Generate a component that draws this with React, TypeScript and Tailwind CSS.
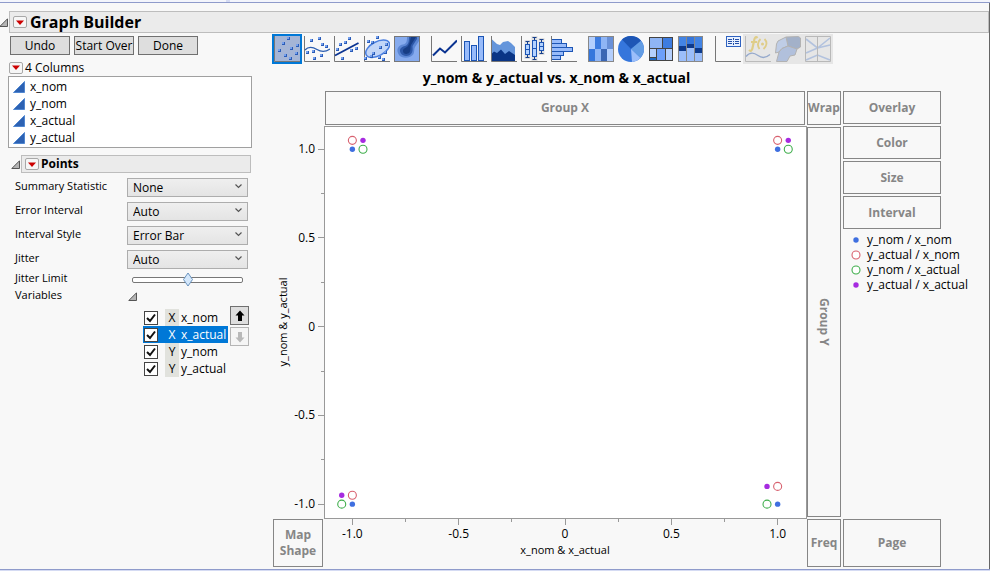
import { useId, useState } from 'react';
import type { ReactNode } from 'react';

const COLUMNS = ['x_nom', 'y_nom', 'x_actual', 'y_actual'];

const OPTIONS = [
    { label: 'Summary Statistic', values: ['None', 'Mean', 'Median'] },
    { label: 'Error Interval', values: ['Auto', 'None', 'Range'] },
    { label: 'Interval Style', values: ['Error Bar', 'Band'] },
    { label: 'Jitter', values: ['Auto', 'None'] },
];

const VARIABLES = [
    { role: 'X', name: 'x_nom' },
    { role: 'X', name: 'x_actual' },
    { role: 'Y', name: 'y_nom' },
    { role: 'Y', name: 'y_actual' },
];

const ROWS = [
    { xNom: -1, yNom: 1, xActual: -0.95, yActual: 1.05 },
    { xNom: 1, yNom: 1, xActual: 1.05, yActual: 1.05 },
    { xNom: -1, yNom: -1, xActual: -1.05, yActual: -0.95 },
    { xNom: 1, yNom: -1, xActual: 0.95, yActual: -0.9 },
];

type Row = (typeof ROWS)[number];

interface Series {
    label: string;
    x: keyof Row;
    y: keyof Row;
    color: string;
    open: boolean;
}

const SERIES: Series[] = [
    { label: 'y_nom / x_nom', x: 'xNom', y: 'yNom', color: '#3f6fe0', open: false },
    { label: 'y_actual / x_nom', x: 'xNom', y: 'yActual', color: '#d8616f', open: true },
    { label: 'y_nom / x_actual', x: 'xActual', y: 'yNom', color: '#3fae4c', open: true },
    { label: 'y_actual / x_actual', x: 'xActual', y: 'yActual', color: '#a62be0', open: false },
];

const TICKS = [-1, -0.75, -0.5, -0.25, 0, 0.25, 0.5, 0.75, 1];

// Axis limits are a little wider than the data, so values map to percentages
const toX = (v: number) => `${50 + v * 44.3}%`;
const toY = (v: number) => `${51.2 - v * 45.5}%`;
const isMajor = (v: number) => (v * 2) % 1 === 0;
const tickLabel = (v: number) => (v === 0 ? '0' : v.toFixed(1));

function Marker({ cx, cy, color, open }: { cx: string; cy: string; color: string; open: boolean }) {
    return open ? (
        <circle cx={cx} cy={cy} r="4" fill="white" stroke={color} strokeWidth="1.1" />
    ) : (
        <circle cx={cx} cy={cy} r="2.7" fill={color} />
    );
}

function Disclosure({ className = '' }: { className?: string }) {
    return (
        <svg width="9" height="9" viewBox="0 0 9 9" className={`shrink-0 ${className}`}>
            <path d="M8.5 0.8V8.5H0.8Z" fill="#b4b4b4" stroke="#555" />
        </svg>
    );
}

function RedTriangle({ label }: { label: string }) {
    return (
        <button
            aria-label={label}
            className="flex h-3 w-[14px] shrink-0 items-center justify-center rounded-xs border border-[#a8a8a8] bg-[#f6f6f6]"
        >
            <svg width="8" height="5" viewBox="0 0 8 5">
                <path d="M0 0.5H8L4 5Z" fill="#cc0000" />
            </svg>
        </button>
    );
}

function Zone({ children, className = '' }: { children: ReactNode; className?: string }) {
    return (
        <div
            className={`flex items-center justify-center border border-[#868686] text-center leading-4 font-bold text-[#868686] ${className}`}
        >
            {children}
        </div>
    );
}

function Axes() {
    return <path d="M0.5 0V25.5H26" fill="none" stroke="#777" />;
}

function Dots({ points }: { points: number[][] }) {
    return (
        <>
            {points.map(([x, y]) => (
                <g key={`${x},${y}`}>
                    <rect x={x - 1.5} y={y - 1.5} width="3" height="3" fill="#2a5cb8" />
                    <rect x={x - 1.5} y={y - 1.5} width="2" height="2" fill="#76a0ec" />
                </g>
            ))}
        </>
    );
}

function BoxGlyph({ x, top, bottom, low, high }: { x: number; top: number; bottom: number; low: number; high: number }) {
    return (
        <g>
            <rect x={x - 3} y={top - 1} width="6" height={bottom - top + 2} fill="#dedede" />
            <path
                d={`M${x} ${top}V${bottom}M${x - 2} ${top + 0.5}H${x + 2}M${x - 2} ${bottom - 0.5}H${x + 2}`}
                stroke="#163f8c"
            />
            <rect x={x - 2} y={low} width="4" height={high - low} fill="#b3d2ff" stroke="#1c55b5" />
            <path d={`M${x - 2} ${(low + high) / 2}H${x + 2}`} stroke="#1c55b5" />
        </g>
    );
}

interface Tool {
    name: string;
    icon: ReactNode;
    disabled?: boolean;
}

const TOOL_GROUPS: Tool[][] = [
    [
        {
            name: 'Points',
            icon: (
                <>
                    <Axes />
                    <Dots points={[[14.5, 2.5], [9.5, 7.5], [23.5, 9.5], [17.5, 12.5], [5.5, 14.5], [22.5, 17.5], [11.5, 19.5], [16.5, 22.5]]} />
                </>
            ),
        },
        {
            name: 'Smoother',
            icon: (
                <>
                    <Axes />
                    <Dots points={[[7.5, 4.5], [15.5, 2.5], [18.5, 8.5], [22.5, 10.5], [3.5, 16.5], [9.5, 15.5], [17.5, 19.5], [10.5, 22.5]]} />
                    <path d="M1 14C5 9.5 9 11 13 13.5S21 16.5 26 13" fill="none" stroke="#2b5db0" strokeWidth="1.3" />
                </>
            ),
        },
        {
            name: 'Line of Fit',
            icon: (
                <>
                    <Axes />
                    <Dots points={[[15.5, 2.5], [11.5, 6.5], [6.5, 8.5], [3.5, 13.5], [22.5, 12.5], [17.5, 14.5], [8.5, 22.5]]} />
                    <path d="M1 19.5L24.5 7" stroke="#0a3391" strokeWidth="1.8" />
                </>
            ),
        },
        {
            name: 'Ellipse',
            icon: (
                <>
                    <Axes />
                    <ellipse cx="13.7" cy="12.7" rx="13" ry="7" transform="rotate(-28 13.7 12.7)" fill="#c3d6f7" stroke="#4a7fe0" strokeWidth="1.5" />
                    <Dots points={[[13.5, 1.5], [4.5, 5.5], [8.5, 6.5], [16.5, 11.5], [22.5, 8.5], [9.5, 17.5], [21.5, 16.5], [7.5, 20.5], [1.5, 22.5], [15.5, 21.5], [19.5, 23.5]]} />
                </>
            ),
        },
        {
            name: 'Contour',
            icon: (
                <>
                    <rect x="0.5" y="0.5" width="25" height="25" fill="#86abee" stroke="#777" />
                    <path d="M13 1H25V5L21 11C20 13 20.5 15 19.5 18C17 22.5 8 23 5 19C1 13 5 9 9 8.5C13 8 13 4 13 1Z" fill="#5c87d4" />
                    <path d="M15 1H23V3L18.5 10C18.5 12 19 14 18 16.5C16 21 9 21 7 17.5C4 13 8 10.5 11 10C15 9 15 4 15 1Z" fill="#2d58a8" />
                    <path d="M17 1H22L17 9C16 12 17 14 15.5 16.5C13 19 9 18 9 15C9 12 12 12 14 10C16 7 16 4 17 1Z" fill="#173d85" />
                </>
            ),
        },
    ],
    [
        {
            name: 'Line',
            icon: (
                <>
                    <Axes />
                    <path d="M2 19.5L9 12.5L14 16.5L26 4.5" fill="none" stroke="#0a3391" strokeWidth="2" />
                </>
            ),
        },
        {
            name: 'Bar',
            icon: (
                <>
                    <g fill="#98bbfa" stroke="#1c55b5">
                        <rect x="3.5" y="5.5" width="5" height="19" />
                        <rect x="10.5" y="9.5" width="5" height="15" />
                        <rect x="17.5" y="0.5" width="5" height="24" />
                    </g>
                    <Axes />
                </>
            ),
        },
        {
            name: 'Area',
            icon: (
                <>
                    <path d="M0.5 3L6 8L9 9L12 6L17 5L20 7L24 11V25H0.5Z" fill="#6495db" />
                    <path d="M0.5 18L3 15.5L6 17L10 13.5L14 18L18 15L24 19V25H0.5Z" fill="#0a3585" />
                    <Axes />
                </>
            ),
        },
        {
            name: 'Box Plot',
            icon: (
                <>
                    <Axes />
                    <BoxGlyph x={6.5} top={5} bottom={22} low={8.5} high={18.5} />
                    <BoxGlyph x={13.5} top={1} bottom={24} low={4.5} high={20.5} />
                    <BoxGlyph x={20.5} top={3} bottom={18} low={6.5} high={14.5} />
                </>
            ),
        },
        {
            name: 'Histogram',
            icon: (
                <>
                    <g fill="#98bbfa" stroke="#1c55b5">
                        <rect x="0.5" y="3.5" width="10" height="4" />
                        <rect x="0.5" y="7.5" width="15" height="4" />
                        <rect x="0.5" y="11.5" width="21" height="4" />
                        <rect x="0.5" y="15.5" width="12" height="4" />
                        <rect x="0.5" y="19.5" width="9" height="4" />
                    </g>
                    <Axes />
                </>
            ),
        },
    ],
    [
        {
            name: 'Heatmap',
            icon: (
                <>
                    <rect width="26" height="26" fill="#888" />
                    <rect x="1" y="1" width="6" height="12" fill="#b4cffd" />
                    <rect x="7" y="1" width="6" height="12" fill="#3d7ce0" />
                    <rect x="13" y="1" width="6" height="12" fill="#8fb5f5" />
                    <rect x="19" y="1" width="6" height="12" fill="#6890d8" />
                    <rect x="1" y="13" width="6" height="12" fill="#3576dc" />
                    <rect x="7" y="13" width="6" height="12" fill="#8fb5f5" />
                    <rect x="13" y="13" width="6" height="12" fill="#3a66b4" />
                    <rect x="19" y="13" width="6" height="12" fill="#b4cffd" />
                </>
            ),
        },
        {
            name: 'Pie',
            icon: (
                <>
                    <circle cx="13" cy="13" r="13" fill="#3576dc" />
                    <path d="M13 13L4 3.6A13 13 0 0 1 23 4.7Z" fill="#1d56b5" />
                    <path d="M13 13L23 4.7A13 13 0 0 1 22.5 22Z" fill="#629ce4" />
                    <path d="M13 13L22.5 22A13 13 0 0 1 14 26Z" fill="#9bbefa" />
                </>
            ),
        },
        {
            name: 'Treemap',
            icon: (
                <>
                    <rect x="1" y="1" width="24" height="24" fill="#444" />
                    <rect x="2" y="2" width="12" height="10" fill="#8fb5f5" />
                    <rect x="15" y="2" width="9" height="10" fill="#3d7ce0" />
                    <rect x="2" y="13" width="6" height="8" fill="#b4cffd" />
                    <rect x="2" y="22" width="6" height="2" fill="#1d68c4" />
                    <rect x="9" y="13" width="8" height="11" fill="#6c9ffa" />
                    <rect x="18" y="13" width="6" height="11" fill="#b4cffd" />
                </>
            ),
        },
        {
            name: 'Mosaic',
            icon: (
                <>
                    <rect width="25" height="26" fill="#888" />
                    <rect x="1" y="1" width="7" height="9" fill="#4384e4" />
                    <rect x="1" y="10" width="7" height="5" fill="#0d3a8c" />
                    <rect x="1" y="15" width="7" height="10" fill="#9bbefa" />
                    <rect x="9" y="1" width="7" height="7" fill="#3576dc" />
                    <rect x="9" y="8" width="7" height="4" fill="#0d3a8c" />
                    <rect x="9" y="12" width="7" height="13" fill="#9bbefa" />
                    <rect x="17" y="1" width="7" height="11" fill="#4384e4" />
                    <rect x="17" y="12" width="7" height="5" fill="#0d3a8c" />
                    <rect x="17" y="17" width="7" height="8" fill="#9bbefa" />
                </>
            ),
        },
    ],
    [
        {
            name: 'Caption Box',
            icon: (
                <>
                    <Axes />
                    <rect x="11.5" y="0.5" width="14" height="10" fill="#e8f1ff" stroke="#2f62c0" />
                    <path d="M13 3.5H17M20 3.5H24M13 5.5H17M20 5.5H24M13 7.5H17M20 7.5H24M18.5 2V4M18.5 5V6M18.5 7V9" stroke="#234fa8" />
                </>
            ),
        },
        {
            name: 'Formula',
            disabled: true,
            icon: (
                <>
                    <path d="M0.5 0V25.5H26" fill="none" stroke="#bbb" />
                    <path d="M1 20.5C5 15.5 9 16.5 13 19.5S21 22 25 18.5" fill="none" stroke="#95a9cc" strokeWidth="1.3" />
                    <g fill="none" stroke="#dfcd88">
                        <path d="M12.5 2C10.5 0 9.5 2 9 5L7.5 12C7 15 5.5 15.5 4 14M6 6H12" strokeWidth="2.2" />
                        <path d="M15.5 3C12.5 6 12.5 10 14.5 13M19.5 3C22.5 6 22 10 18.5 13" strokeWidth="1.8" />
                    </g>
                    <circle cx="17.5" cy="8" r="1.5" fill="#dfcd88" />
                </>
            ),
        },
        {
            name: 'Map Shapes',
            disabled: true,
            icon: (
                <g stroke="#b2b2b2">
                    <path d="M11 1L23.5 0.5L25.5 2V11L22 13L13 10Z" fill="#a3b1c9" />
                    <path d="M3 5L11 1L13 10L7 12.5L4 16L0.5 17L1.5 8Z" fill="#bfcde6" />
                    <path d="M13 10L22 13L20 19L15 20L12 25.5H1.5L4 16L7 12.5Z" fill="#b1c0dc" />
                </g>
            ),
        },
        {
            name: 'Parallel',
            disabled: true,
            icon: (
                <>
                    <path
                        d="M1 3L12.5 12L25 2M1 17L12.5 12L25 9M1 24L12.5 19L25 24"
                        fill="none"
                        stroke="#b2c2de"
                        strokeWidth="1.6"
                    />
                    <path d="M0.5 0.5H25.5V25.5H0.5ZM12.5 0.5V25.5" fill="none" stroke="#b8b8b8" />
                </>
            ),
        },
    ],
];

function Toolbar() {
    const [active, setActive] = useState('Points');

    return (
        <div className="flex gap-[7px]">
            {TOOL_GROUPS.map((group) => (
                <div key={group[0].name} className="flex">
                    {group.map((tool) => (
                        <button
                            key={tool.name}
                            aria-label={tool.name}
                            disabled={tool.disabled}
                            onClick={() => setActive(tool.name)}
                            className={`flex size-[30px] items-center justify-center ${
                                active === tool.name ? 'border-2 border-[#0078d7] bg-[#a5b5d6]' : ''
                            } ${tool.disabled ? 'bg-[#e6e6e6]' : ''}`}
                        >
                            <svg width="26" height="26" viewBox="0 0 26 26" className="shrink-0">
                                {tool.icon}
                            </svg>
                        </button>
                    ))}
                </div>
            ))}
        </div>
    );
}

function JitterSlider({ id }: { id: string }) {
    const [value, setValue] = useState(50);

    return (
        <div className="relative mx-[5px] -mb-[3px] h-5">
            <input
                id={id}
                type="range"
                value={value}
                onChange={(e) => setValue(Number(e.target.value))}
                className="absolute inset-0 w-full opacity-0"
            />
            <div className="pointer-events-none flex h-full items-center">
                <div className="h-[6px] w-full rounded-xs border border-[#777] bg-white" />
            </div>
            <svg
                width="11"
                height="15"
                viewBox="0 0 11 15"
                className="pointer-events-none absolute top-[2px] -translate-x-1/2"
                style={{ left: `${value}%` }}
            >
                <path d="M5.5 1L10 7.5L5.5 14L1 7.5Z" fill="#d5e8fb" stroke="#6a93be" />
            </svg>
        </div>
    );
}

function VariableList() {
    const [checked, setChecked] = useState([true, true, true, true]);
    const [selected, setSelected] = useState(1);

    return (
        <div className="mt-[3px] flex justify-end gap-[2px] pr-[3px]">
            <ul className="mt-[3px] w-[85px]">
                {VARIABLES.map((v, i) => (
                    <li
                        key={v.name}
                        onClick={() => setSelected(i)}
                        className={`h-[17px] ${i === selected ? 'bg-[#0078d7] text-white' : ''}`}
                    >
                        <label className="flex h-full items-center pl-px">
                            <span className="grid">
                                <input
                                    type="checkbox"
                                    checked={checked[i]}
                                    onChange={() => setChecked(checked.map((c, j) => (j === i ? !c : c)))}
                                    className="peer col-start-1 row-start-1 size-[14px] appearance-none border border-[#444] bg-white"
                                />
                                <svg
                                    viewBox="0 0 14 14"
                                    className="pointer-events-none invisible col-start-1 row-start-1 size-[14px] peer-checked:visible"
                                >
                                    <path d="M3 7L6 10L11 3.5" fill="none" stroke="#111" strokeWidth="2" />
                                </svg>
                            </span>
                            <span
                                className={`ml-[7px] flex h-full w-[14px] items-center justify-center ${
                                    i === selected ? '' : 'bg-[#e1e2dd]'
                                }`}
                            >
                                {v.role}
                            </span>
                            <span className="ml-[2px]">{v.name}</span>
                        </label>
                    </li>
                ))}
            </ul>
            <div className="flex flex-col gap-[2px]">
                <button
                    aria-label="Move up"
                    className="flex size-[19px] items-center justify-center border border-[#707070] bg-[#dedede]"
                >
                    <svg width="10" height="12" viewBox="0 0 10 12">
                        <path d="M5 0.5L9.5 5.5H7V11H3V5.5H0.5Z" fill="black" />
                    </svg>
                </button>
                <button
                    aria-label="Move down"
                    disabled
                    className="flex size-[19px] items-center justify-center border border-[#b5b5b5] bg-[#f5f5f5]"
                >
                    <svg width="10" height="12" viewBox="0 0 10 12">
                        <path d="M5 11.5L9.5 6.5H7V1H3V6.5H0.5Z" fill="#b8b8b8" />
                    </svg>
                </button>
            </div>
        </div>
    );
}

function ControlPanel() {
    const id = useId();

    return (
        <aside className="w-[243px] shrink-0">
            <div className="flex gap-1 pl-px">
                {['Undo', 'Start Over', 'Done'].map((name) => (
                    <button
                        key={name}
                        className="flex h-[19px] w-[60px] items-center justify-center border border-[#707070] bg-[#dedede] whitespace-nowrap"
                    >
                        {name}
                    </button>
                ))}
            </div>

            <div className="mt-1 flex h-[17px] items-center gap-[2px]">
                <RedTriangle label="Columns menu" />
                <span>4 Columns</span>
            </div>
            <ul className="-ml-px border border-[#a0a0a0] bg-white py-px pl-1">
                {COLUMNS.map((name) => (
                    <li key={name} className="flex h-[17px] items-center gap-[5px]">
                        <svg width="12" height="12" viewBox="0 0 12 12">
                            <path d="M11.5 0.5V11.5H0.5Z" fill="#2d62b3" stroke="#4f86d0" />
                        </svg>
                        {name}
                    </li>
                ))}
            </ul>

            <div className="mt-[7px] flex items-center pr-px pl-[2px]">
                <Disclosure />
                <div className="ml-px flex h-[18px] grow items-center gap-[2px] border border-[#bdbdbd] bg-[#ebebeb] pl-[3px] font-bold">
                    <RedTriangle label="Points menu" />
                    <span>Points</span>
                </div>
            </div>

            <div className="mt-[5px] flex flex-col gap-[5px] pr-1 pl-[6px]">
                {OPTIONS.map((option, i) => (
                    <div key={option.label} className="grid h-[19px] grid-cols-[112px_1fr]">
                        <label htmlFor={`${id}-${i}`} className="text-[11px] leading-4">
                            {option.label}
                        </label>
                        <div className="relative">
                            <select
                                id={`${id}-${i}`}
                                className="h-[19px] w-full appearance-none border border-[#adadad] bg-linear-to-b from-[#efefef] to-[#e4e4e4] pl-[5px]"
                            >
                                {option.values.map((v) => (
                                    <option key={v}>{v}</option>
                                ))}
                            </select>
                            <svg
                                width="7"
                                height="5"
                                viewBox="0 0 7 5"
                                className="pointer-events-none absolute top-[6px] right-[6px]"
                            >
                                <path d="M0.5 0.5L3.5 3.5L6.5 0.5" fill="none" stroke="#555" strokeWidth="1.2" />
                            </svg>
                        </div>
                    </div>
                ))}
            </div>
            <div className="mt-px grid grid-cols-[112px_1fr] pr-1 pl-[6px]">
                <label htmlFor={`${id}-limit`} className="text-[11px] leading-4">
                    Jitter Limit
                </label>
                <JitterSlider id={`${id}-limit`} />
                <span className="text-[11px] leading-4">Variables</span>
                <Disclosure className="mt-[5px] ml-px" />
            </div>
            <VariableList />
        </aside>
    );
}

function YAxis() {
    return (
        <svg className="h-full w-full overflow-visible">
            {TICKS.map((v) => (
                <line key={v} x1={isMajor(v) ? 45 : 48} x2="51" y1={toY(v)} y2={toY(v)} stroke="#999" shapeRendering="crispEdges" />
            ))}
            {TICKS.filter(isMajor).map((v) => (
                <text key={v} x="42" y={toY(v)} dy="4" textAnchor="end">
                    {tickLabel(v)}
                </text>
            ))}
            <svg x="14" y="50%" className="overflow-visible">
                <text transform="rotate(-90)" textAnchor="middle" className="text-[11px]">
                    y_nom &amp; y_actual
                </text>
            </svg>
        </svg>
    );
}

function XAxis() {
    return (
        <svg className="h-full w-full overflow-visible">
            {TICKS.map((v) => (
                <line key={v} x1={toX(v)} x2={toX(v)} y1="0" y2={isMajor(v) ? 6 : 3} stroke="#999" shapeRendering="crispEdges" />
            ))}
            {TICKS.filter(isMajor).map((v) => (
                <text key={v} x={toX(v)} y="19" textAnchor="middle">
                    {tickLabel(v)}
                </text>
            ))}
            <text x="50%" y="35" textAnchor="middle" className="text-[11px]">
                x_nom &amp; x_actual
            </text>
        </svg>
    );
}

function Plot() {
    return (
        <div className="-mt-px -mr-[2px] -mb-[2px] -ml-px border border-[#999] bg-white pr-px pb-px">
            <svg className="h-full w-full">
                {SERIES.map((s) =>
                    ROWS.map((row, i) => (
                        <Marker key={`${s.label}-${i}`} cx={toX(row[s.x])} cy={toY(row[s.y])} color={s.color} open={s.open} />
                    )),
                )}
            </svg>
        </div>
    );
}

function Graph() {
    return (
        <div className="grid grow grid-cols-[50px_1fr_34px_98px] grid-rows-[34px_minmax(300px,1fr)_48px] gap-[2px] pl-px">
            <Zone className="col-start-2">Group X</Zone>
            <Zone>Wrap</Zone>
            <div className="row-span-2 flex flex-col gap-[2px]">
                {['Overlay', 'Color', 'Size', 'Interval'].map((name) => (
                    <Zone key={name} className="h-[33px]">
                        {name}
                    </Zone>
                ))}
                <ul className="mt-px leading-[15px]">
                    {SERIES.map((s) => (
                        <li key={s.label} className="flex h-[15px] items-center gap-[5px] pl-[7px] whitespace-nowrap">
                            <svg width="12" height="12" className="shrink-0">
                                <Marker cx="6" cy="6" color={s.color} open={s.open} />
                            </svg>
                            {s.label}
                        </li>
                    ))}
                </ul>
            </div>
            <YAxis />
            <Plot />
            <Zone>
                <span className="[writing-mode:vertical-rl]">Group Y</span>
            </Zone>
            <Zone>
                Map
                <br />
                Shape
            </Zone>
            <XAxis />
            <Zone>Freq</Zone>
            <Zone>Page</Zone>
        </div>
    );
}

export default function App() {
    return (
        <div className="flex min-h-screen flex-col bg-[#f8f8f8] font-['Open_Sans','Noto_Sans',sans-serif] text-xs leading-4 text-black">
            <div className="flex h-[3px] shrink-0 gap-1 border-b border-[#8f9bcb] bg-[#d5dbf3]">
                <div className="w-[226px] bg-[#f3f5fc]" />
                <div className="grow bg-[#f3f5fc]" />
            </div>
            <div className="flex grow flex-col border-r border-[#666] pt-2 pb-[2px]">
                <header className="flex items-center">
                    <Disclosure className="-ml-px" />
                    <div className="ml-px flex h-[22px] grow items-center gap-[3px] border border-[#bdbdbd] bg-[#ebebeb] pl-[3px]">
                        <RedTriangle label="Graph Builder menu" />
                        <h1 className="text-base leading-5 font-bold">Graph Builder</h1>
                    </div>
                </header>
                <main className="flex grow pt-[3px] pl-[9px]">
                    <ControlPanel />
                    <section className="-mt-[2px] ml-5 flex grow flex-col pr-12">
                        <Toolbar />
                        <h2 className="my-1 pr-[100px] text-center text-sm leading-[19px] font-bold">
                            y_nom &amp; y_actual vs. x_nom &amp; x_actual
                        </h2>
                        <Graph />
                    </section>
                </main>
            </div>
            <div className="h-[2px] shrink-0 border-t border-[#8f9bcb] bg-[#d5dbf3]" />
        </div>
    );
}
